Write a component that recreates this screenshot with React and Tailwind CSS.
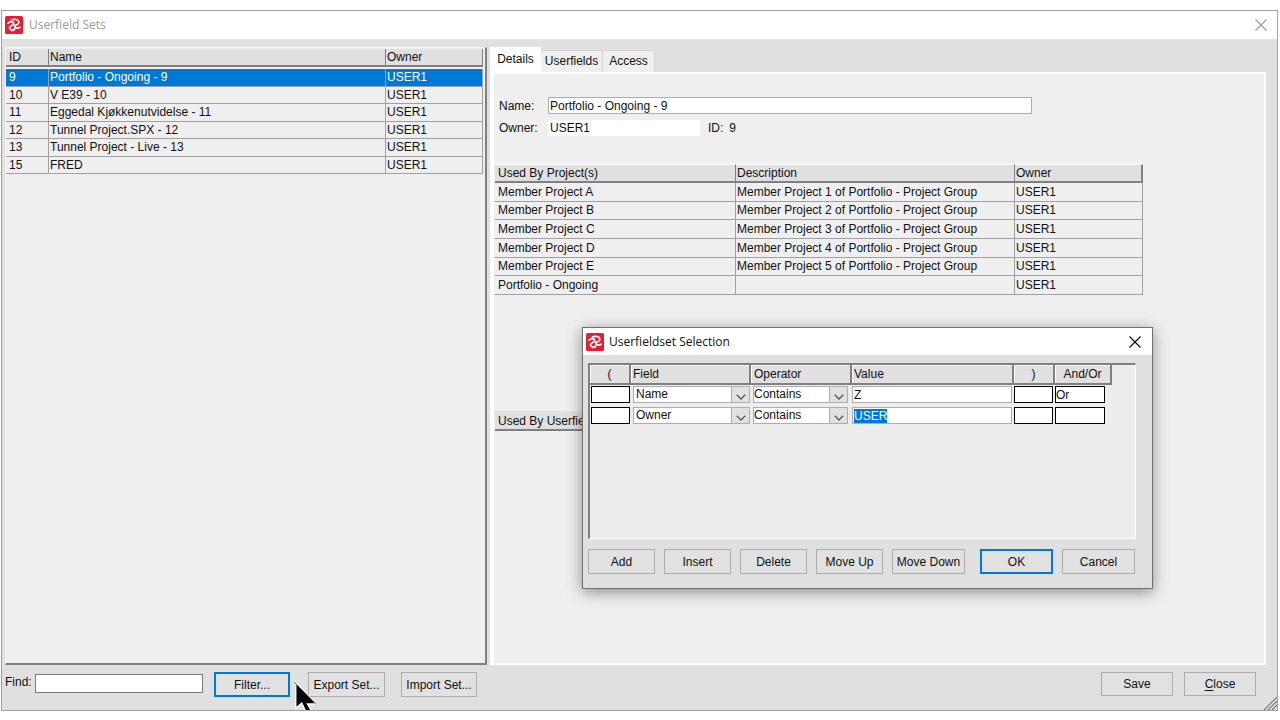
import { useEffect, useRef } from "react";

const SETS = [
  { id: "9", name: "Portfolio - Ongoing - 9", owner: "USER1" },
  { id: "10", name: "V E39 - 10", owner: "USER1" },
  { id: "11", name: "Eggedal Kjøkkenutvidelse - 11", owner: "USER1" },
  { id: "12", name: "Tunnel Project.SPX - 12", owner: "USER1" },
  { id: "13", name: "Tunnel Project - Live - 13", owner: "USER1" },
  { id: "15", name: "FRED", owner: "USER1" },
];

const PROJECTS = [
  ["Member Project A", "Member Project 1 of Portfolio - Project Group", "USER1"],
  ["Member Project B", "Member Project 2 of Portfolio - Project Group", "USER1"],
  ["Member Project C", "Member Project 3 of Portfolio - Project Group", "USER1"],
  ["Member Project D", "Member Project 4 of Portfolio - Project Group", "USER1"],
  ["Member Project E", "Member Project 5 of Portfolio - Project Group", "USER1"],
  ["Portfolio - Ongoing", "", "USER1"],
];

function AppIcon() {
  return (
    <svg viewBox="0 0 18 18" className="size-[18px] shrink-0" aria-hidden="true">
      <rect width="18" height="18" rx="1.5" fill="#e51f33" />
      <g fill="none" stroke="#fff" strokeWidth="1.7" strokeLinecap="round" strokeLinejoin="round">
        <path d="M3 7.4C4.4 5.2 7.8 5 8.6 6.8C9.2 8.6 6.8 9.4 5 10.6C3.8 11.6 4.6 13 6 13.6" />
        <path d="M6.4 3.9C9.4 2.8 13.4 3.2 13.8 5.9C14 8 12 9.2 9.4 9.4C9.8 12 12.8 13.2 15.2 11.2" />
        <path d="M6.6 14.4C8.4 14.4 9.6 13.6 9.6 12.4" />
      </g>
    </svg>
  );
}

function CloseGlyph({ className }) {
  return (
    <svg viewBox="0 0 12 12" className={className} fill="none" stroke="currentColor" strokeWidth="1.1" aria-hidden="true">
      <path d="M0.5 0.5L11.5 11.5M11.5 0.5L0.5 11.5" />
    </svg>
  );
}

function Button({ className, primary, children }) {
  return (
    <button
      type="button"
      className={`flex shrink-0 items-center justify-center bg-[#e1e1e1] whitespace-nowrap ${
        primary ? "border-2 border-[#0078d7]" : "border border-[#adadad]"
      } ${className}`}
    >
      {children}
    </button>
  );
}

function Combo({ label, options, className, pad }) {
  return (
    <div className={`relative h-[17px] ${className}`}>
      <select
        aria-label={label}
        defaultValue={options[0]}
        className={`block h-full w-full appearance-none border border-[#abadb3] bg-white pr-5 leading-[15px] ${pad}`}
      >
        {options.map((o) => (
          <option key={o}>{o}</option>
        ))}
      </select>
      <span className="pointer-events-none absolute inset-y-0 right-0 flex w-[19px] items-end justify-center border border-[#adadad] bg-[#e1e1e1] pb-[2px]">
        <svg viewBox="0 0 10 6" className="h-[6px] w-[10px]" fill="none" stroke="#555" strokeWidth="1.3" aria-hidden="true">
          <path d="M0.8 0.8L5 5L9.2 0.8" />
        </svg>
      </span>
    </div>
  );
}

const HEAD = "border-r-2 border-b-2 border-[#808080] bg-[#e0e0e0] shadow-[inset_1px_1px_0_#fff]";
const GRID_COLS = "grid grid-cols-[41px_120px_101px_162px_41px_57px]";
const BOX = "h-[17px] border border-black bg-white";

function CriteriaRow({ row, field, value, joiner, valueRef }) {
  return (
    <div className={GRID_COLS}>
      <input aria-label={`Open bracket ${row}`} className={`${BOX} ml-px w-[39px]`} />
      <Combo label={`Field ${row}`} options={field} className="ml-0.5 w-[117px]" pad="pl-0.5" />
      <Combo label={`Operator ${row}`} options={["Contains", "Equals"]} className="ml-0.5 w-[95px]" pad="pl-0" />
      <input
        ref={valueRef}
        aria-label={`Value ${row}`}
        defaultValue={value}
        className="h-[17px] w-[160px] border border-[#abadb3] bg-white pl-px leading-[15px] outline-none selection:bg-[#0078d7] selection:text-white"
      />
      <input aria-label={`Close bracket ${row}`} className={`${BOX} w-[39px]`} />
      <input aria-label={`And/Or ${row}`} defaultValue={joiner} className={`${BOX} w-[50px]`} />
    </div>
  );
}

function SelectionDialog() {
  const active = useRef(null);
  useEffect(() => {
    active.current?.focus();
    active.current?.select();
  }, []);
  return (
    <div
      role="dialog"
      aria-label="Userfieldset Selection"
      className="absolute top-[316px] left-[580px] w-[571px] border border-[#6f6f6f] bg-[#e0e0e0] shadow-[0_3px_14px_rgba(0,0,0,0.42)]"
    >
      <header className="flex h-[27px] items-center justify-between bg-white pr-[11px] pl-[3px]">
        <div className="flex items-center gap-[5px]">
          <AppIcon />
          <h2 className="font-['Open_Sans',sans-serif] text-[12px]">Userfieldset Selection</h2>
        </div>
        <button type="button" aria-label="Close dialog">
          <CloseGlyph className="size-3 text-black" />
        </button>
      </header>
      <div className="px-[5px] pt-2 pb-3.5">
        <div className="h-[176px] w-[548px] border-t-2 border-r border-b border-l-2 border-t-[#808080] border-r-white border-b-white border-l-[#808080] bg-[#ededed]">
          <div className={`${GRID_COLS} h-5 leading-[18px]`}>
            <div className={`${HEAD} text-center`}>(</div>
            <div className={`${HEAD} pl-0.5`}>Field</div>
            <div className={`${HEAD} pl-[3px]`}>Operator</div>
            <div className={`${HEAD} pl-0.5`}>Value</div>
            <div className={`${HEAD} text-center`}>)</div>
            <div className={`${HEAD} text-center`}>And/Or</div>
          </div>
          <div className="mt-px flex flex-col gap-1">
            <CriteriaRow row={1} field={["Name", "Owner"]} value="Z" joiner="Or" />
            <CriteriaRow row={2} field={["Owner", "Name"]} value="USER" joiner="" valueRef={active} />
          </div>
        </div>
        <div className="mt-2.5 flex h-[25px] gap-[9px]">
          <Button className="w-[67px]">Add</Button>
          <Button className="w-[67px]">Insert</Button>
          <Button className="w-[67px]">Delete</Button>
          <Button className="w-[67px]">Move Up</Button>
          <Button className="w-[73px]">Move Down</Button>
          <Button className="ml-1.5 w-[73px]" primary>OK</Button>
          <Button className="w-[73px]">Cancel</Button>
        </div>
      </div>
    </div>
  );
}

const TH = "border-b-2 border-[#808080] bg-[#e0e0e0] py-0 pr-0 text-left font-normal";
const TD = "border-b border-[#a0a0a0] py-0 pr-0";

export default function App() {
  return (
    <div className="flex min-h-screen flex-col bg-white pt-2.5 pr-0.5 pb-[9px] pl-px font-['Liberation_Sans',Arial,sans-serif] text-[12px] leading-4 text-[#111]">
      <main className="relative flex flex-1 flex-col border border-[#a0a0a0] bg-[#e0e0e0]">
        <header className="flex h-7 shrink-0 items-center justify-between bg-white pr-2.5 pl-[3px]">
          <div className="flex items-center gap-1.5">
            <AppIcon />
            <h1 className="font-['Open_Sans',sans-serif] text-[12px] text-[#999]">Userfield Sets</h1>
          </div>
          <button type="button" aria-label="Close window">
            <CloseGlyph className="size-3 text-[#999]" />
          </button>
        </header>

        <div className="flex flex-1 gap-[3px] pt-2 pr-[11px] pl-[3px]">
          <section className="w-[482px] shrink-0 border-t border-r-2 border-b-2 border-l border-t-[#f4f4f4] border-r-[#808080] border-b-[#808080] border-l-[#f4f4f4] bg-[#efefef]">
            <table className="mt-px h-[125px] w-[477px] table-fixed border-separate border-spacing-0">
              <thead>
                <tr className="h-[18px]">
                  <th className={`${TH} w-[42px] pl-[3px]`}>ID</th>
                  <th className={`${TH} border-l pl-px`}>Name</th>
                  <th className={`${TH} w-[98px] border-r border-l pl-px`}>Owner</th>
                </tr>
                <tr className="h-0.5" aria-hidden="true">
                  <td className="p-0" colSpan={3}></td>
                </tr>
              </thead>
              <tbody>
                {SETS.map((s, i) => (
                  <tr key={s.id} className={i === 0 ? "bg-[#0078d7] text-white" : ""}>
                    <td className={`${TD} pl-[3px]`}>{s.id}</td>
                    <td className={`${TD} border-l pl-px`}>{s.name}</td>
                    <td className={`${TD} border-r border-l pl-px`}>{s.owner}</td>
                  </tr>
                ))}
              </tbody>
            </table>
          </section>

          <section className="flex flex-1 flex-col">
            <div role="tablist" className="flex h-[25px] items-end">
              <button type="button" role="tab" aria-selected="true" className="h-[25px] w-[51px] bg-white pb-0.5">
                Details
              </button>
              <button type="button" role="tab" aria-selected="false" className="h-[22px] w-[62px] border-t border-r border-[#d4d4d4] bg-[#efefef] pb-0.5">
                Userfields
              </button>
              <button type="button" role="tab" aria-selected="false" className="h-[22px] w-[52px] border-t border-r border-[#d4d4d4] bg-[#efefef] pb-0.5">
                Access
              </button>
            </div>
            <div role="tabpanel" className="flex-1 border-2 border-l-4 border-white bg-[#efefef] pt-[23px] pl-px">
              <div className="flex items-center pl-1">
                <label htmlFor="set-name" className="w-[49px]">Name:</label>
                <input id="set-name" defaultValue="Portfolio - Ongoing - 9" className="h-[17px] w-[484px] border border-[#abadb3] bg-white pl-px" />
              </div>
              <div className="mt-1.5 flex items-center pl-1">
                <label htmlFor="set-owner" className="w-[49px]">Owner:</label>
                <input id="set-owner" defaultValue="USER1" className="h-4 w-[152px] bg-white pl-0.5" />
                <span className="ml-2">ID:</span>
                <span className="ml-1.5">9</span>
              </div>

              <table className="mt-7 h-[131px] w-[648px] table-fixed border-separate border-spacing-0">
                <thead>
                  <tr className="h-[18px]">
                    <th className={`${TH} w-[240px] border-t border-t-white pl-[3px]`}>Used By Project(s)</th>
                    <th className={`${TH} border-t border-l border-t-white pl-px`}>Description</th>
                    <th className={`${TH} w-[129px] border-t border-r-2 border-l border-t-white pl-px`}>Owner</th>
                  </tr>
                </thead>
                <tbody>
                  {PROJECTS.map(([project, description, owner]) => (
                    <tr key={project}>
                      <td className={`${TD} pl-[3px]`}>{project}</td>
                      <td className={`${TD} border-l pl-px`}>{description}</td>
                      <td className={`${TD} border-r border-l pl-px`}>{owner}</td>
                    </tr>
                  ))}
                </tbody>
              </table>

              <h3 className="mt-[116px] w-[648px] border-b-2 border-[#808080] bg-[#e0e0e0] pt-0.5 pl-[3px]">Used By Userfield(s)</h3>
            </div>
          </section>
        </div>

        <footer className="flex h-[45px] shrink-0 items-start pt-[7px] pr-[21px] pl-[3px]">
          <label htmlFor="find" className="mt-0.5 w-[30px]">Find:</label>
          <input id="find" className="mt-0.5 h-[19px] w-[168px] border border-[#7a7a7a] bg-white px-1" />
          <Button className="ml-[11px] h-[25px] w-[76px]" primary>Filter...</Button>
          <Button className="ml-[18px] h-[25px] w-[77px]">Export Set...</Button>
          <Button className="ml-4 h-[25px] w-[76px]">Import Set...</Button>
          <div className="ml-auto flex gap-[11px]">
            <Button className="h-6 w-[72px]">Save</Button>
            <Button className="h-6 w-[72px]">
              <span className="underline underline-offset-2">C</span>lose
            </Button>
          </div>
        </footer>

        <svg viewBox="0 0 13 13" className="absolute right-0 bottom-0 size-[13px]" stroke="#777" strokeWidth="1.2" aria-hidden="true">
          <path d="M0 13L13 0M4 13L13 4M8 13L13 8" />
        </svg>

        <SelectionDialog />

        <svg viewBox="0 0 24 28" className="absolute bottom-0 left-[292px] h-[28px] w-[24px]" aria-hidden="true">
          <path d="M0.8 0.8V26L6.8 21L11 30L16 28L12.4 22H21.5Z" transform="translate(1 0)" fill="#000" stroke="#fff" strokeWidth="1.3" />
          <path d="M0.4 0.4L22.6 22.4" stroke="#333" strokeWidth="0.8" />
        </svg>
      </main>
    </div>
  );
}
